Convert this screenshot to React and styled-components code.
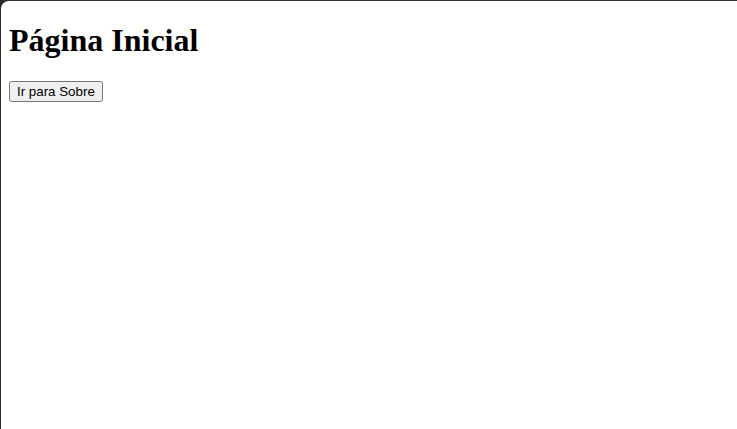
import React from "react"
import styled, { createGlobalStyle } from "styled-components"

const GlobalStyle = createGlobalStyle`
  html, body {
    margin: 0;
    background: #2e2e2e;
  }
`

const Frame = styled.main`
  display: flow-root;
  margin: 1px 0 0 1px;
  min-height: calc(100vh - 1px);
  padding: 0 8px;
  background: #fff;
  border-top-left-radius: 8px;
  font-family: "Liberation Serif", serif;
  color: #000;
`

const Title = styled.h1`
  font-size: 2em;
  font-weight: bold;
  margin: 0.67em 0;
`

const NavButton = styled.button`
  font-family: "Liberation Sans", Arial, sans-serif;
  font-size: 13.333px;
`

const App = () => {
  return (
    <>
      <GlobalStyle />
      <Frame>
        <Title>Página Inicial</Title>
        <NavButton>Ir para Sobre</NavButton>
      </Frame>
    </>
  )
}

export default App
